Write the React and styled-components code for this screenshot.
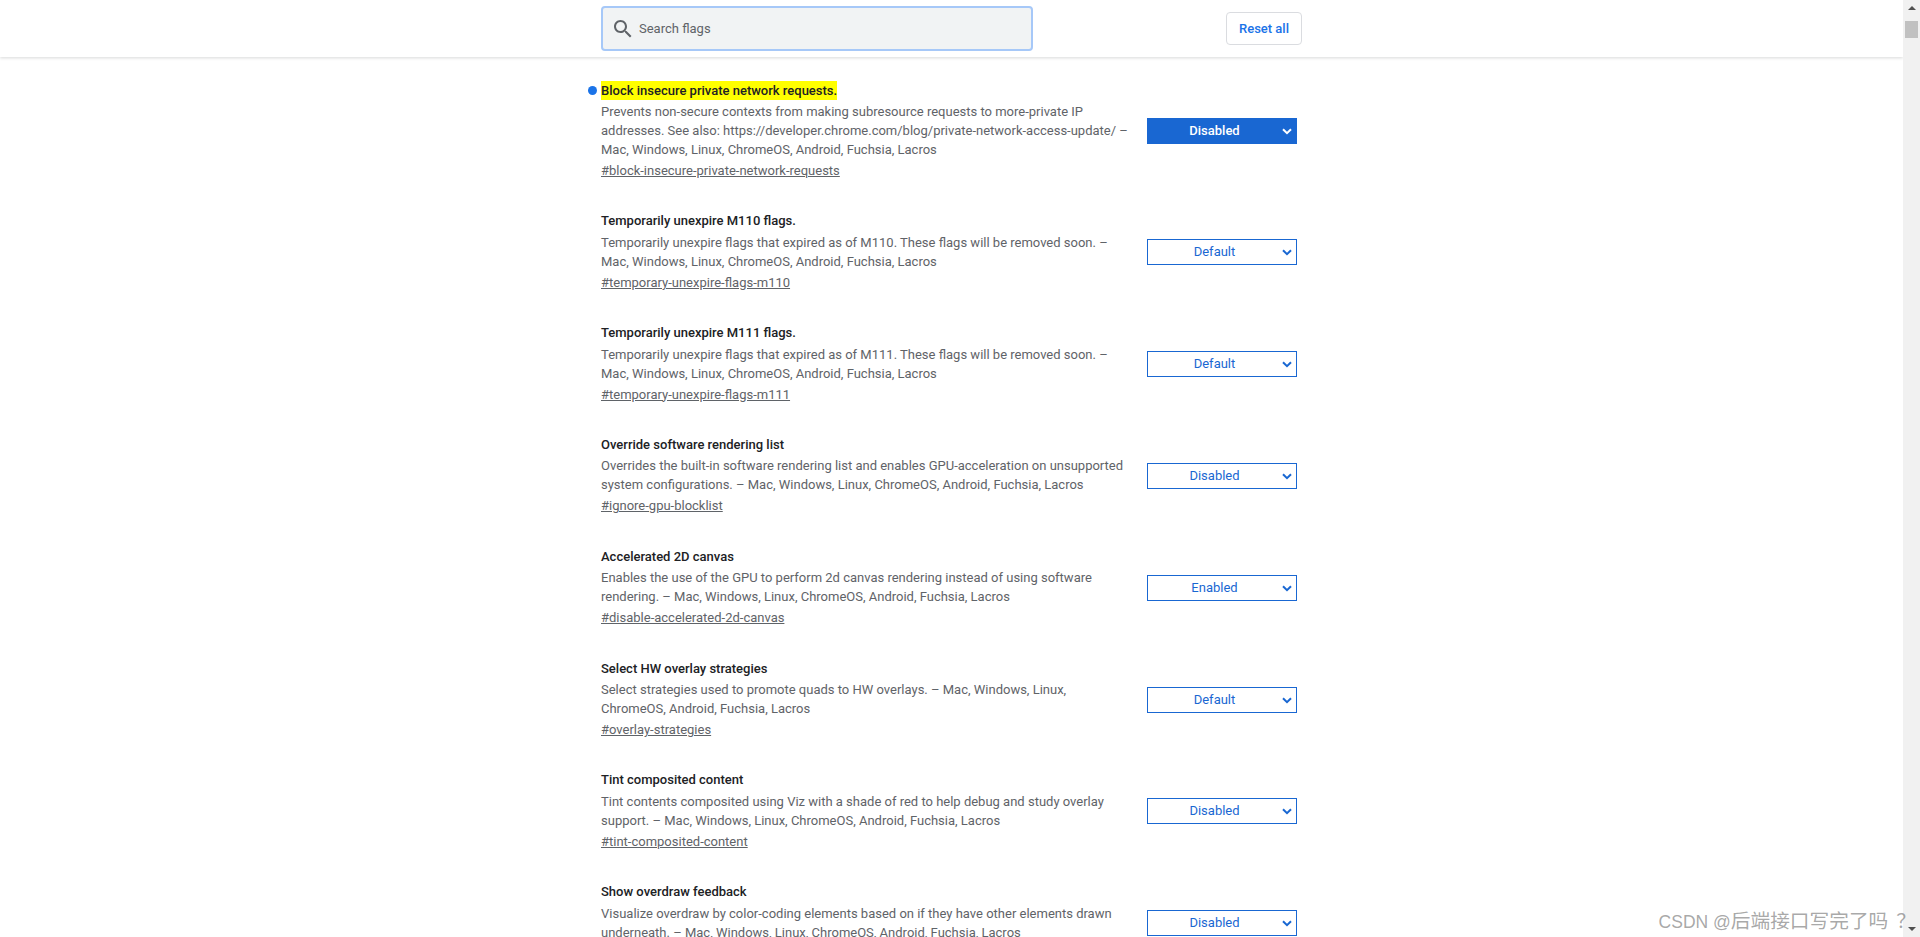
import React from "react";
import styled, { createGlobalStyle } from "styled-components";

const PLATFORMS = "Mac, Windows, Linux, ChromeOS, Android, Fuchsia, Lacros";

const flags = [
  {
    title: "Block insecure private network requests.",
    desc: `Prevents non-secure contexts from making subresource requests to more-private IP addresses. See also: https://developer.chrome.com/blog/private-network-access-update/ – ${PLATFORMS}`,
    link: "#block-insecure-private-network-requests",
    value: "Disabled",
    active: true,
  },
  {
    title: "Temporarily unexpire M110 flags.",
    desc: `Temporarily unexpire flags that expired as of M110. These flags will be removed soon. – ${PLATFORMS}`,
    link: "#temporary-unexpire-flags-m110",
    value: "Default",
  },
  {
    title: "Temporarily unexpire M111 flags.",
    desc: `Temporarily unexpire flags that expired as of M111. These flags will be removed soon. – ${PLATFORMS}`,
    link: "#temporary-unexpire-flags-m111",
    value: "Default",
  },
  {
    title: "Override software rendering list",
    desc: `Overrides the built-in software rendering list and enables GPU-acceleration on unsupported system configurations. – ${PLATFORMS}`,
    link: "#ignore-gpu-blocklist",
    value: "Disabled",
  },
  {
    title: "Accelerated 2D canvas",
    desc: `Enables the use of the GPU to perform 2d canvas rendering instead of using software rendering. – ${PLATFORMS}`,
    link: "#disable-accelerated-2d-canvas",
    value: "Enabled",
  },
  {
    title: "Select HW overlay strategies",
    desc: `Select strategies used to promote quads to HW overlays. – ${PLATFORMS}`,
    link: "#overlay-strategies",
    value: "Default",
  },
  {
    title: "Tint composited content",
    desc: `Tint contents composited using Viz with a shade of red to help debug and study overlay support. – ${PLATFORMS}`,
    link: "#tint-composited-content",
    value: "Disabled",
  },
  {
    title: "Show overdraw feedback",
    desc: `Visualize overdraw by color-coding elements based on if they have other elements drawn underneath. – ${PLATFORMS}`,
    link: "#show-overdraw-feedback",
    value: "Disabled",
  },
];

function App() {
  return (
    <Page>
      <GlobalStyle />
      <Content>
        <Header>
          <HeaderInner>
            <SearchBox>
              <SearchIcon viewBox="0 0 24 24">
                <path d="M15.5 14h-.79l-.28-.27C15.41 12.59 16 11.11 16 9.5 16 5.91 13.09 3 9.5 3S3 5.91 3 9.5 5.91 16 9.5 16c1.61 0 3.09-.59 4.23-1.57l.27.28v.79l5 4.99L20.49 19l-4.99-5zm-6 0C7.01 14 5 11.99 5 9.5S7.01 5 9.5 5 14 7.01 14 9.5 11.99 14 9.5 14z" />
              </SearchIcon>
              <SearchInput placeholder="Search flags" />
            </SearchBox>
            <ResetButton>Reset all</ResetButton>
          </HeaderInner>
        </Header>
        <List>
          {flags.map((flag) => (
            <Row key={flag.link}>
              <Info>
                {flag.active && <Dot />}
                <Title>{flag.active ? <Mark>{flag.title}</Mark> : flag.title}</Title>
                <Desc>{flag.desc}</Desc>
                <FlagLink href={flag.link}>{flag.link}</FlagLink>
              </Info>
              <SelectWrap>
                <Select $active={flag.active} defaultValue={flag.value}>
                  <option>Default</option>
                  <option>Enabled</option>
                  <option>Disabled</option>
                </Select>
                <Chevron viewBox="0 0 10 7" $active={flag.active}>
                  <path d="M1 1.2 L5 5.2 L9 1.2" />
                </Chevron>
              </SelectWrap>
            </Row>
          ))}
        </List>
      </Content>
      <Scrollbar>
        <ArrowUp />
        <Thumb />
        <Spacer />
        <ArrowDown />
      </Scrollbar>
      <Watermark>
        CSDN @<WatermarkCjk>后端接口写完了吗</WatermarkCjk>
        <WatermarkMark>？</WatermarkMark>
      </Watermark>
    </Page>
  );
}

export default App;

const GlobalStyle = createGlobalStyle`
  html, body {
    margin: 0;
    padding: 0;
    height: 100%;
    overflow: hidden;
    background: #fff;
    font-family: Roboto, "Liberation Sans", sans-serif;
  }
`;

const Page = styled.div`
  display: flex;
  height: 937px;
  overflow: hidden;
`;

const Content = styled.div`
  flex: 1;
  min-width: 0;
`;

const Header = styled.div`
  height: 57px;
  box-shadow: 0 1px 3px rgba(60, 64, 67, 0.2);
  display: flex;
  justify-content: center;
`;

const HeaderInner = styled.div`
  width: 701px;
  display: flex;
  align-items: center;
  justify-content: space-between;
`;

const SearchBox = styled.div`
  width: 432px;
  height: 45px;
  box-sizing: border-box;
  display: flex;
  align-items: center;
  gap: 4px;
  padding-left: 8px;
  background: #f1f3f4;
  border: 2px solid #a6c8f8;
  border-radius: 4px;
`;

const SearchIcon = styled.svg`
  width: 24px;
  height: 24px;
  fill: #5f6368;
  flex: none;
`;

const SearchInput = styled.input`
  flex: 1;
  border: none;
  outline: none;
  background: transparent;
  font: 13px Roboto, sans-serif;
  color: #202124;
  padding: 0;

  &::placeholder {
    color: #5f6368;
    opacity: 1;
  }
`;

const ResetButton = styled.button`
  width: 76px;
  height: 33px;
  box-sizing: border-box;
  padding: 0;
  background: #fff;
  border: 1px solid #dadce0;
  border-radius: 4px;
  color: #1a73e8;
  font: 500 13px Roboto, sans-serif;
`;

const List = styled.div`
  width: 701px;
  margin: 0 auto;
  padding-top: 23.6px;
  display: flex;
  flex-direction: column;
  gap: 31.43px;
`;

const Row = styled.div`
  width: 696px;
  display: flex;
  align-items: center;
  justify-content: space-between;
`;

const Info = styled.div`
  position: relative;
  width: 530px;
  font-size: 13px;
  line-height: 19px;
`;

const Dot = styled.span`
  position: absolute;
  left: -13px;
  top: 5px;
  width: 9px;
  height: 9px;
  border-radius: 50%;
  background: #1a73e8;
`;

const Title = styled.div`
  color: #202124;
  font-weight: 500;
  margin-bottom: 2.4px;
`;

const Mark = styled.span`
  background: #ff0;
  display: inline-block;
`;

const Desc = styled.div`
  color: #5f6368;
  margin-bottom: 2px;
`;

const FlagLink = styled.a`
  display: block;
  color: #5f6368;
  text-decoration: underline;
`;

const SelectWrap = styled.div`
  position: relative;
  width: 150px;
  height: 26px;
  margin-top: 1.6px;
  flex: none;
`;

const Select = styled.select`
  appearance: none;
  width: 100%;
  height: 100%;
  box-sizing: border-box;
  margin: 0;
  padding: 0 15px 1px 0;
  border: 1px solid #1967d2;
  border-radius: 0;
  outline: none;
  text-align: center;
  font: ${(props) => (props.$active ? 500 : 400)} 13px Roboto, sans-serif;
  background: ${(props) => (props.$active ? "#1967d2" : "#fff")};
  color: ${(props) => (props.$active ? "#fff" : "#1967d2")};
`;

const Chevron = styled.svg`
  position: absolute;
  right: 5px;
  top: 10px;
  width: 10px;
  height: 7px;
  pointer-events: none;
  fill: none;
  stroke: ${(props) => (props.$active ? "#fff" : "#1967d2")};
  stroke-width: 2;
`;

const Scrollbar = styled.div`
  width: 17px;
  flex: none;
  background: #f1f1f1;
  display: flex;
  flex-direction: column;
  align-items: center;
`;

const ArrowUp = styled.div`
  margin-top: 6px;
  width: 0;
  height: 0;
  border-left: 4px solid transparent;
  border-right: 4px solid transparent;
  border-bottom: 4px solid #505050;
`;

const Thumb = styled.div`
  margin-top: 11px;
  width: 13px;
  height: 17px;
  background: #c1c1c1;
`;

const Spacer = styled.div`
  flex: 1;
`;

const ArrowDown = styled.div`
  margin-bottom: 6px;
  width: 0;
  height: 0;
  border-left: 4px solid transparent;
  border-right: 4px solid transparent;
  border-top: 4px solid #505050;
`;

const Watermark = styled.div`
  position: absolute;
  right: 4px;
  top: 905px;
  font: 17.5px "Liberation Sans", "Noto Sans CJK SC", sans-serif;
  color: rgba(130, 130, 130, 0.7);
  white-space: nowrap;
`;

const WatermarkCjk = styled.span`
  font-size: 19.7px;
`;

const WatermarkMark = styled(WatermarkCjk)`
  margin-left: 8px;
`;
